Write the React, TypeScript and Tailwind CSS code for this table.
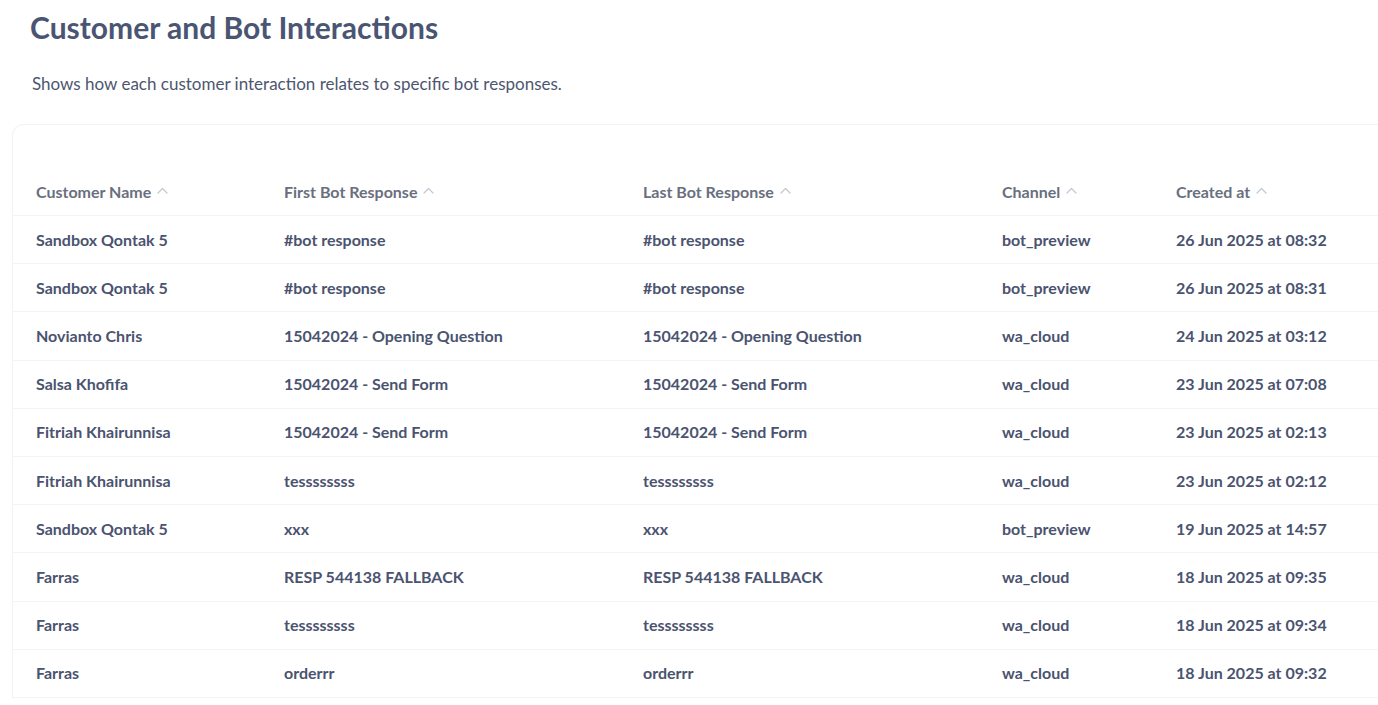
import React from "react";

const rows = [
  ["Sandbox Qontak 5", "#bot response", "#bot response", "bot_preview", "26 Jun 2025 at 08:32"],
  ["Sandbox Qontak 5", "#bot response", "#bot response", "bot_preview", "26 Jun 2025 at 08:31"],
  ["Novianto Chris", "15042024 - Opening Question", "15042024 - Opening Question", "wa_cloud", "24 Jun 2025 at 03:12"],
  ["Salsa Khofifa", "15042024 - Send Form", "15042024 - Send Form", "wa_cloud", "23 Jun 2025 at 07:08"],
  ["Fitriah Khairunnisa", "15042024 - Send Form", "15042024 - Send Form", "wa_cloud", "23 Jun 2025 at 02:13"],
  ["Fitriah Khairunnisa", "tessssssss", "tessssssss", "wa_cloud", "23 Jun 2025 at 02:12"],
  ["Sandbox Qontak 5", "xxx", "xxx", "bot_preview", "19 Jun 2025 at 14:57"],
  ["Farras", "RESP 544138 FALLBACK", "RESP 544138 FALLBACK", "wa_cloud", "18 Jun 2025 at 09:35"],
  ["Farras", "tessssssss", "tessssssss", "wa_cloud", "18 Jun 2025 at 09:34"],
  ["Farras", "orderrr", "orderrr", "wa_cloud", "18 Jun 2025 at 09:32"],
];

const headers = ["Customer Name", "First Bot Response", "Last Bot Response", "Channel", "Created at"];
const cols = "grid grid-cols-[248px_359px_359px_174px_1fr]";

function Caret() {
  return (
    <svg width="11" height="7" viewBox="0 0 11 7" fill="none" className="ml-[6px] mt-[-2px]">
      <path d="M1 6L5.5 1.5L10 6" stroke="#c3c7d0" strokeWidth="1.2" strokeLinecap="round" strokeLinejoin="round" />
    </svg>
  );
}

export default function App() {
  return (
    <div className="w-[1378px] h-[705px] overflow-hidden bg-white" style={{ fontFamily: "Lato, 'Noto Sans', sans-serif" }}>
      <h1 className="pl-[30px] pt-[8px] text-[30px] leading-[38px] font-bold text-[#4a5573]">Customer and Bot Interactions</h1>
      <p className="pl-[32px] mt-[27px] text-[17px] leading-[22px] text-[#4d566f]">
        Shows how each customer interaction relates to specific bot responses.
      </p>
      <div className="ml-[12px] mt-[29px] w-[1400px] rounded-tl-[12px] border-l border-t border-[#f2f2f4] pt-[43px]">
        <div className={`${cols} h-[48px] items-center border-b border-[#f4f4f6]`}>
          {headers.map((h) => (
            <div key={h} className="pl-[23px] flex items-center text-[16px] font-bold text-[#696f7e]">
              {h}
              <Caret />
            </div>
          ))}
        </div>
        {rows.map((r, i) => (
          <div key={i} className={`${cols} h-[48.2px] items-center border-b border-[#f4f4f6]`}>
            {r.map((c, j) => (
              <div key={j} className="pl-[23px] text-[16px] font-bold text-[#4a5370]">
                {c}
              </div>
            ))}
          </div>
        ))}
      </div>
    </div>
  );
}
